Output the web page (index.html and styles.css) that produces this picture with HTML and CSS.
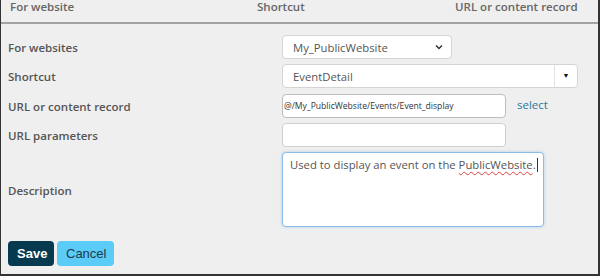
FILE: index.html
```html
<!DOCTYPE html>
<html lang="en">
<head>
    <meta charset="UTF-8">
    <meta name="viewport" content="width=device-width, initial-scale=1.0">
    <title>Shortcut Edit</title>
    <link rel="stylesheet" href="styles.css">
</head>
<body>

<div class="frame">
    <div class="list-header">
        <span class="col-site">For website</span>
        <span class="col-shortcut">Shortcut</span>
        <span class="col-url">URL or content record</span>
    </div>

    <form class="edit-form">
        <div class="row">
            <label class="label">For websites</label>
            <div class="field">
                <div class="select-box">
                    <span>My_PublicWebsite</span>
                    <svg class="chevron" width="8" height="6" viewBox="0 0 8 6"><path d="M1 1.5 L4 4.5 L7 1.5" fill="none" stroke="#333" stroke-width="1.5"/></svg>
                </div>
            </div>
        </div>
        <div class="row row-combo">
            <label class="label">Shortcut</label>
            <div class="field">
                <div class="combo">
                    <input class="combo-input" type="text" value="EventDetail">
                    <span class="combo-btn">&#9660;</span>
                </div>
            </div>
        </div>
        <div class="row">
            <label class="label">URL or content record</label>
            <div class="field">
                <input class="text-input small-text" type="text" value="@/My_PublicWebsite/Events/Event_display">
                <a href="#" class="select-link">select</a>
            </div>
        </div>
        <div class="row">
            <label class="label">URL parameters</label>
            <div class="field">
                <input class="text-input" type="text" value="">
            </div>
        </div>
        <div class="row">
            <label class="label">Description</label>
            <div class="field">
                <div class="textarea">Used to display an event on the <span class="misspelled">PublicWebsite</span>.<span class="caret"></span></div>
            </div>
        </div>
        <div class="actions">
            <a href="#" class="button save">Save</a>
            <a href="#" class="button cancel">Cancel</a>
        </div>
    </form>
</div>

</body>
</html>
```

FILE: styles.css
```css
body {
    margin: 0;
    background-color: #fff;
    font-family: "Open Sans", "Noto Sans", sans-serif;
}

.frame {
    width: 597px;
    height: 274px;
    background-color: #efefef;
    border-left: 1px solid #333;
    border-right: 2px solid #333;
    border-bottom: 2px solid #333;
    overflow: hidden;
}

.list-header {
    display: grid;
    grid-template-columns: 247px 198px auto;
    align-items: start;
    height: 22px;
    padding: 0 0 0 9px;
    border-bottom: 2px solid #a3a3a3;
    font-size: 11.5px;
    font-weight: 600;
    color: #666;
    line-height: 14px;
}

.edit-form {
    padding: 11px 0 0 7px;
}

.row {
    display: flex;
    align-items: center;
    margin-bottom: 5px;
}

.row-combo {
    margin-bottom: 6px;
}

.label {
    width: 274px;
    margin-top: 1px;
    font-size: 11.5px;
    font-weight: 600;
    color: #555;
}

.field {
    display: flex;
    align-items: center;
}

.select-box {
    display: flex;
    align-items: center;
    justify-content: space-between;
    width: 170px;
    height: 24px;
    padding: 0 8px 0 10px;
    box-sizing: border-box;
    background-color: #fff;
    border: 1px solid #d4d4d4;
    border-radius: 4px;
    font-size: 11.3px;
    color: #555;
}

.combo {
    display: flex;
    width: 296px;
    height: 24px;
    background-color: #fff;
    border: 1px solid #d4d4d4;
    border-radius: 4px;
    box-sizing: border-box;
}

.combo-input {
    flex: 1;
    border: none;
    background: transparent;
    padding: 0 0 0 10px;
    font-family: inherit;
    font-size: 11.3px;
    color: #555;
    outline: none;
}

.combo-btn {
    width: 22px;
    border-left: 1px solid #e2e2e2;
    font-size: 7px;
    color: #111;
    text-align: center;
    line-height: 22px;
}

.text-input {
    width: 224px;
    height: 24px;
    padding: 0 6px;
    box-sizing: border-box;
    background-color: #fff;
    border: 1px solid #cfcfcf;
    border-radius: 4px;
    font-family: inherit;
    font-size: 11.3px;
    color: #555;
}

.small-text {
    padding: 0 1px;
    font-size: 8.6px;
    color: #333;
    border-color: #bdbdbd;
}

.select-link {
    margin-left: 11px;
    margin-top: -3px;
    font-size: 11.5px;
    color: #2c7a9e;
    text-decoration: none;
}

.textarea {
    width: 262px;
    height: 75px;
    padding: 3px 3px 3px 7px;
    box-sizing: border-box;
    background-color: #fff;
    border: 1px solid #8cbdea;
    border-radius: 4px;
    box-shadow: 0 0 3px rgba(102, 170, 230, 0.5);
    font-size: 11.3px;
    color: #555;
    line-height: 17px;
    white-space: nowrap;
}

.misspelled {
    text-decoration: underline wavy #e04040;
    text-decoration-thickness: 1px;
    text-underline-offset: 2px;
}

.caret {
    display: inline-block;
    width: 1px;
    height: 14px;
    margin-left: 1px;
    background-color: #333;
    vertical-align: -3px;
}

.actions {
    display: flex;
    gap: 3px;
    margin-top: 14px;
}

.button {
    display: inline-block;
    height: 25px;
    padding: 0 9px;
    border-radius: 4px;
    font-family: "Liberation Sans", Arial, sans-serif;
    font-size: 13px;
    line-height: 25px;
    text-decoration: none;
    box-sizing: border-box;
}

.save {
    width: 46px;
    background-color: #073a4f;
    color: #fff;
    font-weight: bold;
}

.cancel {
    width: 57px;
    background-color: #5bcbf7;
    color: #1c3a4c;
}
```
